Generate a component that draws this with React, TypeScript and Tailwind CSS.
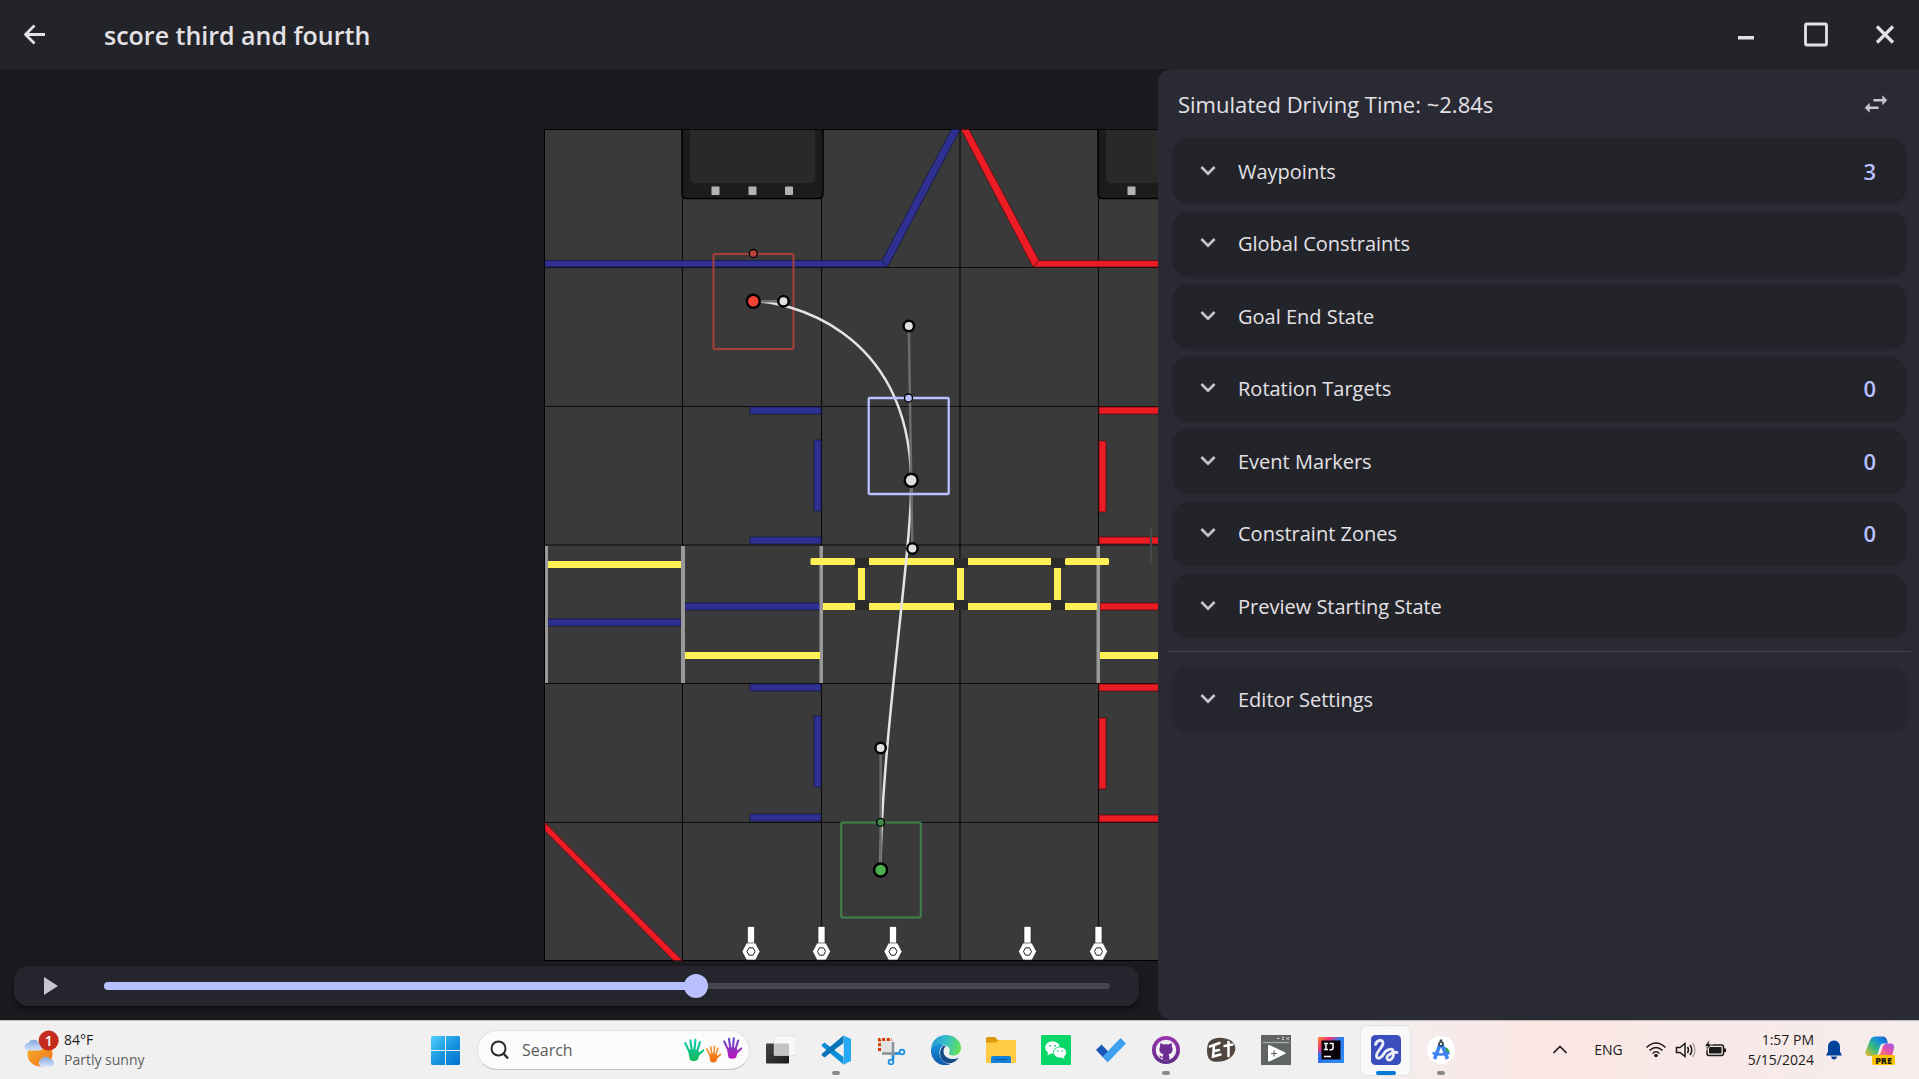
import { useState, type ReactNode } from "react";

const SECTIONS: { label: string; count?: number }[] = [
  { label: "Waypoints", count: 3 },
  { label: "Global Constraints" },
  { label: "Goal End State" },
  { label: "Rotation Targets", count: 0 },
  { label: "Event Markers", count: 0 },
  { label: "Constraint Zones", count: 0 },
  { label: "Preview Starting State" },
];

function MaterialIcon({ d, className }: { d: string; className?: string }) {
  return (
    <svg viewBox="0 0 24 24" className={className ?? "size-[30px]"} fill="currentColor" aria-hidden="true">
      <path d={d} />
    </svg>
  );
}

function TitleBar() {
  return (
    <header className="flex h-[69px] shrink-0 items-center bg-[#232429] text-[#e4e1e6]">
      <button type="button" aria-label="Back" className="ml-5 flex size-[30px] items-center justify-center">
        <svg viewBox="0 0 30 30" className="size-[30px]" fill="none" stroke="currentColor" strokeWidth="2.800" aria-hidden="true">
          <path d="M25 14.500H6.500M14.500 5.500 5.500 14.500l9 9" strokeLinejoin="round" strokeLinecap="butt" />
        </svg>
      </button>
      <h1 className="ml-[54px] text-[25px] leading-8 font-semibold">score third and fourth</h1>
      <div className="ml-auto flex">
        <button type="button" aria-label="Minimize" className="flex h-[69px] w-[70px] items-center justify-center">
          <svg viewBox="0 0 30 30" className="size-[30px]" aria-hidden="true">
            <rect x="7" y="16" width="16" height="3.500" fill="currentColor" />
          </svg>
        </button>
        <button type="button" aria-label="Maximize" className="flex h-[69px] w-[70px] items-center justify-center">
          <svg viewBox="0 0 30 30" className="size-[30px]" aria-hidden="true">
            <rect x="4.500" y="4" width="21" height="21" rx="1.500" fill="none" stroke="currentColor" strokeWidth="2.800" />
          </svg>
        </button>
        <button type="button" aria-label="Close" className="flex h-[69px] w-[68px] items-center justify-center">
          <svg viewBox="0 0 30 30" className="size-[30px]" aria-hidden="true">
            <path d="M7 6.500l16 16M23 6.500L7 22.500" fill="none" stroke="currentColor" strokeWidth="3.200" />
          </svg>
        </button>
      </div>
    </header>
  );
}

type Bar = [x: number, y: number, w: number, h: number];

const BLUE_BARS: Bar[] = [
  [750, 407, 71, 7],
  [814, 440, 7, 71],
  [750, 537, 71, 7],
  [548, 619, 133, 7],
  [685, 603, 135, 7],
  [750, 684, 71, 7],
  [814, 716, 7, 71],
  [750, 814, 71, 7],
];
const RED_BARS: Bar[] = [
  [1099, 407, 72, 7],
  [1099, 441, 7, 71],
  [1099, 537, 72, 7],
  [1100, 603, 72, 7],
  [1099, 684, 72, 7],
  [1099, 718, 7, 71],
  [1099, 815, 72, 7],
];
const YELLOW_BARS: Bar[] = [
  [548, 561, 133, 7],
  [685, 652, 135, 7],
  [1100, 652, 134, 7],
  [869, 558, 85, 7],
  [968, 558, 83, 7],
  [823, 603, 32, 7],
  [869, 603, 85, 7],
  [968, 603, 83, 7],
  [1065, 603, 32, 7],
  [858, 568, 7, 32],
  [957, 568, 7, 32],
  [1054, 568, 7, 32],
];

function Bars({ bars, fill, stroke }: { bars: Bar[]; fill: string; stroke: string }) {
  return (
    <g fill={fill} stroke={stroke} strokeWidth="0.8">
      {bars.map(([x, y, w, h]) => (
        <rect key={`${x}-${y}`} x={x} y={y} width={w} height={h} />
      ))}
    </g>
  );
}

function Backstage({ x }: { x: number }) {
  return (
    <g>
      <path d={`M${x} 129v64.500q0 5 5 5h131q5 0 5 -5v-64.500z`} fill="#1c1c1c" stroke="#000" strokeWidth="1.5" />
      <path d={`M${x + 8} 130v48q0 5 5 5h115q5 0 5 -5v-48z`} fill="#292929" />
      {[29.5, 66.5, 103].map((dx) => (
        <rect key={dx} x={x + dx} y="186.500" width="8" height="8.500" rx="0.800" fill="#b3b3b3" />
      ))}
    </g>
  );
}

function Pin({ x }: { x: number }) {
  return (
    <g transform={`translate(${x} 951.5)`} stroke="#222" strokeWidth="0.6">
      <rect x="-3.500" y="-25" width="7" height="17" fill="#fff" />
      <path d="M-4.500 -8.500h9L9 0l-4.500 8.500h-9L-9 0z" fill="#fff" />
      <path d="M-2 -3.700h4L4 0l-2 3.700h-4L-4 0z" fill="#fff" strokeWidth="1" />
    </g>
  );
}

function Field() {
  return (
    <svg viewBox="544 129 831 832" className="h-[832px] w-[831px] shrink-0" role="img" aria-label="Field map with path">
      <rect x="544.500" y="129.500" width="830" height="831" fill="#3a3a3b" stroke="#000" />
      <g stroke="#0c0c0c" strokeWidth="1.2">
        {[682.5, 821.5, 960, 1098.5, 1237].map((x) => (
          <path key={x} d={`M${x} 129V961`} />
        ))}
        {[267.5, 406.5, 545, 683.5, 822.5].map((y) => (
          <path key={y} d={`M544 ${y}H1375`} />
        ))}
      </g>
      <Backstage x={682} />
      <Backstage x={1098} />
      <path d="M545 260.500H882L951.500 129.500H960L887.500 267H545z" fill="#2e3192" stroke="#15173f" strokeWidth="0.8" />
      <path d="M882 260.500L887.500 267" stroke="#15173f" />
      <path d="M961 129.500H969L1039 260.500H1375V267H1033z" fill="#ec1c24" stroke="#5a0d10" strokeWidth="0.8" />
      <path d="M1039 260.500L1033 267" stroke="#5a0d10" />
      <path d="M545 822.500L682.500 960.500H673.500L545 831z" fill="#ec1c24" stroke="#5a0d10" strokeWidth="0.800" />
      <Bars bars={BLUE_BARS} fill="#2e3192" stroke="#15173f" />
      <Bars bars={RED_BARS} fill="#ec1c24" stroke="#5a0d10" />
      <g fill="#999">
        <rect x="545" y="546" width="3" height="137" />
        <rect x="681" y="546" width="4" height="137" />
        <rect x="819.500" y="546" width="3.500" height="137" />
        <rect x="1096.500" y="546" width="3.500" height="137" />
      </g>
      <g fill="#2b2a29">
        {[855, 954, 1051].map((x) => (
          <g key={x}>
            <rect x={x} y="558" width="14" height="10" />
            <rect x={x} y="600" width="14" height="10" />
          </g>
        ))}
      </g>
      <g fill="#fff056">
        <rect x="810.500" y="558" width="44.500" height="7" rx="1.500" />
        <rect x="1065" y="558" width="44" height="7" rx="1.500" />
      </g>
      <Bars bars={YELLOW_BARS} fill="#fff056" stroke="none" />
      {[751, 821.5, 893, 1027.5, 1098.5].map((x) => (
        <Pin key={x} x={x} />
      ))}

      <g fill="none" strokeWidth="2">
        <rect x="713.500" y="254" width="80" height="95" rx="1" stroke="#a8403a" />
        <rect x="841.200" y="822.500" width="79.500" height="95" rx="1" stroke="#41824a" />
      </g>
      <path
        d="M753.300 301.300C783.500 301.300 908.800 326 911.200 480.300C912.400 548.300 880.600 748 880.600 870"
        fill="none"
        stroke="#e4e4e4"
        strokeWidth="2.500"
      />
      <g stroke="#6c6c6c" strokeWidth="2.500">
        <path d="M753.300 301.300H783.500M908.800 326L911.200 480.300L912.400 548.300M880.600 748V870" />
      </g>
      <rect x="868.700" y="398" width="80" height="96" rx="1" fill="none" stroke="#b8c0ff" strokeWidth="2.300" />
      <g stroke="#000" strokeWidth="2.400">
        <circle cx="783.500" cy="301.300" r="5.200" fill="#e0e0e0" />
        <circle cx="908.800" cy="326" r="5.200" fill="#e0e0e0" />
        <circle cx="912.400" cy="548.500" r="5.200" fill="#e0e0e0" />
        <circle cx="880.600" cy="748" r="5.200" fill="#e0e0e0" />
        <circle cx="753.300" cy="301.300" r="6.500" fill="#f44336" />
        <circle cx="911.200" cy="480.300" r="6.500" fill="#e0e0e0" />
        <circle cx="880.600" cy="870" r="6.500" fill="#4caf50" />
      </g>
      <g stroke="#000" strokeWidth="1.300">
        <circle cx="753.300" cy="253.500" r="4" fill="#b9443b" />
        <circle cx="908.500" cy="398" r="4" fill="#b8c0ff" />
        <circle cx="880.600" cy="822.300" r="4" fill="#3f8746" />
      </g>
    </svg>
  );
}

function Timeline() {
  const max = 284;
  const [time, setTime] = useState(167);
  return (
    <div className="mt-[5px] mr-[780px] ml-3.5 flex h-10 items-center rounded-[14px] bg-[#25252e] pr-[29px] shadow-md shadow-black/40">
      <button type="button" aria-label="Play" className="ml-5 text-[#c7c5d0]">
        <MaterialIcon d="M8 4.800v14.400L19.200 12z" />
      </button>
      <div className="relative ml-10 flex flex-1 items-center">
        <div className="h-1.5 w-full rounded-full bg-[#46464f]" />
        <div
          className="absolute h-2 rounded-full bg-[#b8c0ff]"
          style={{ width: `${(time / max) * 100}%` }}
        />
        <input
          type="range"
          aria-label="Preview time"
          min={0}
          max={max}
          value={time}
          onChange={(e) => setTime(Number(e.target.value))}
          className="absolute -left-3 h-6 w-[calc(100%+24px)] appearance-none bg-transparent [&::-webkit-slider-thumb]:size-6 [&::-webkit-slider-thumb]:appearance-none [&::-webkit-slider-thumb]:rounded-full [&::-webkit-slider-thumb]:bg-[#b8c0ff]"
        />
      </div>
    </div>
  );
}

function SectionCard({ label, count, className }: { label: string; count?: number; className: string }) {
  return (
    <button
      type="button"
      aria-expanded="false"
      className={`flex h-[63px] w-full items-center rounded-2xl pr-[30px] pl-5 text-left shadow-sm shadow-black/20 ${className}`}
    >
      <span className="text-[#c7c5d0]">
        <MaterialIcon d="M16.590 8.090L12 12.670 7.410 8.090 6 9.500l6 6 6-6z" />
      </span>
      <span className="mt-0.5 ml-[15px] flex-1 text-[20px] leading-7">{label}</span>
      {count !== undefined && <span className="text-[22px] leading-7 font-semibold text-[#b8c0ff]">{count}</span>}
    </button>
  );
}

function Sidebar() {
  return (
    <aside className="h-full w-[761px] rounded-l-[14px] bg-[#2a2a34] px-2.5 text-[#e4e1e6]">
      <div className="flex h-[70px] items-center pr-[18px] pl-2.5">
        <h2 className="flex-1 text-[22px] leading-8">Simulated Driving Time: ~2.84s</h2>
        <button type="button" aria-label="Swap sides" className="text-[#c7c5d0]">
          <MaterialIcon d="M6.990 11L3 15l3.990 4v-3H14v-2H6.990v-3zM21 9l-3.990-4v3H10v2h7.010v3L21 9z" />
        </button>
      </div>
      <div className="mr-[3px] ml-[5px] flex h-[498px] flex-col justify-between">
        {SECTIONS.map((s) => (
          <SectionCard key={s.label} label={s.label} count={s.count} className="bg-[#232429]" />
        ))}
      </div>
      <hr className="mt-3.5 mr-[-2px] border-[#46464f]" />
      <div className="mt-[15px] mr-[3px] ml-[5px]">
        <SectionCard label="Editor Settings" className="bg-[#25252e]" />
      </div>
    </aside>
  );
}

function Svg({ children, size = "size-[30px]" }: { children: ReactNode; size?: string }) {
  return (
    <svg viewBox="0 0 30 30" className={size} aria-hidden="true">
      {children}
    </svg>
  );
}

function Hand({ from, to, id, className }: { from: string; to: string; id: string; className: string }) {
  return (
    <svg viewBox="0 0 24 26" className={className} aria-hidden="true">
      <defs>
        <linearGradient id={id} x1="0" y1="0" x2="0" y2="26" gradientUnits="userSpaceOnUse">
          <stop offset="0" stopColor={from} />
          <stop offset="1" stopColor={to} />
        </linearGradient>
      </defs>
      <g stroke={`url(#${id})`} strokeWidth="2.400" strokeLinecap="round" fill="none">
        <path d="M6.500 14L2.500 5.500M9.500 13L8 2.500M12.500 13L13.500 2M15.500 14L18.500 4.500M16 19L22 13.500" />
      </g>
      <path d="M5.500 13.500Q10 11 16.500 13.500L18.500 16.500L16 24Q11 26.500 7.500 24z" fill={`url(#${id})`} />
    </svg>
  );
}

const APPS: { name: string; running?: boolean; active?: boolean; icon: ReactNode }[] = [
  {
    name: "Task View",
    icon: (
      <Svg>
        <defs>
          <linearGradient id="tv" x1="0" y1="0" x2="1" y2="1">
            <stop offset="0" stopColor="#444" />
            <stop offset="1" stopColor="#1b1b1b" />
          </linearGradient>
        </defs>
        <rect x="0" y="8.500" width="23" height="20" rx="1" fill="url(#tv)" />
        <rect x="8" y="1" width="22" height="19.500" rx="1" fill="#f8f8f8" stroke="#d0d0d0" strokeWidth="0.500" />
        <rect x="8" y="8.500" width="15" height="12" fill="#c4c4c4" />
      </Svg>
    ),
  },
  {
    name: "Visual Studio Code",
    running: true,
    icon: (
      <Svg>
        <path d="M1 9.500L3.500 7.500L22.500 22V29.500L1.200 11.500Q.4 10.300 1 9.500z" fill="#0a8fd8" />
        <path d="M1 20.500L3.500 22.500L22.500 8V.5L1.200 18.500Q.4 19.700 1 20.500z" fill="#0873b8" />
        <path d="M21.500 0L30 4V26L21.500 30Q23 29 22.800 27V3Q23 1 21.500 0z" fill="#24a9f2" />
      </Svg>
    ),
  },
  {
    name: "Snipping Tool",
    icon: (
      <Svg>
        <rect x="3" y="4" width="14" height="14" fill="#e3e3e3" />
        <path d="M3.500 16V4.500H16" fill="none" stroke="#d83b01" strokeWidth="3" strokeDasharray="3 1.700" />
        <path d="M17 7V23M6 18.500H23" fill="none" stroke="#8a9199" strokeWidth="2.500" />
        <path d="M17 20V25M19 18.500H24" fill="none" stroke="#1b93e0" strokeWidth="2.500" />
        <circle cx="26" cy="17" r="2.400" fill="none" stroke="#1b93e0" strokeWidth="1.800" />
        <circle cx="15" cy="27" r="2.400" fill="none" stroke="#1b93e0" strokeWidth="1.800" />
      </Svg>
    ),
  },
  {
    name: "Microsoft Edge",
    icon: (
      <Svg>
        <defs>
          <linearGradient id="edgeTop" x1="0" y1="0.300" x2="1" y2="0.500">
            <stop offset="0" stopColor="#2495d8" />
            <stop offset="0.500" stopColor="#35c1c9" />
            <stop offset="1" stopColor="#66e155" />
          </linearGradient>
          <linearGradient id="edgeSide" x1="0" y1="0" x2="0" y2="1">
            <stop offset="0" stopColor="#1a93dc" />
            <stop offset="1" stopColor="#0b58a8" />
          </linearGradient>
        </defs>
        <path d="M0 14C1 5 7 0 15 0C24 0 30 6 30 13C30 18 26 20.500 22 20.500C19 20.500 17.500 19.500 18 18C19.500 16 19 12 15 10.500C9 8 2 9.500 0 14z" fill="url(#edgeTop)" />
        <path d="M0 14C2 9.500 8 7.500 13 10C8 12 7 19 10.500 24C12.500 27.500 16.500 29.500 19.500 29.200C9 33 -1 25 0 14z" fill="url(#edgeSide)" />
        <path d="M13 10.500C8.500 13 8 20 11 24.500C14 29.500 22 30.500 28 22.500C22 26 12.500 23.500 12.500 16.500C12.500 14 13.500 12 15 11z" fill="#124a8a" />
      </Svg>
    ),
  },
  {
    name: "File Explorer",
    icon: (
      <Svg>
        <path d="M0 3.500Q0 2 1.500 2H9L12.500 5.500H28.500Q30 5.500 30 7V12H0z" fill="#dd9a08" />
        <path d="M0 7.500H10L13 5H30V28H0z" fill="#ffcb45" />
        <path d="M5 28V23Q5 21 7 21H23Q25 21 25 23V28z" fill="#1482d4" />
        <path d="M9 24.500H21" stroke="#0b5aa5" strokeWidth="1.200" />
      </Svg>
    ),
  },
  {
    name: "WeChat",
    icon: (
      <Svg>
        <rect width="30" height="30" rx="1.500" fill="#07d768" />
        <ellipse cx="11.500" cy="12.500" rx="7.300" ry="6.300" fill="#fff" />
        <path d="M7 17L6.500 20.500L10.500 18z" fill="#fff" />
        <ellipse cx="19" cy="17.500" rx="6.500" ry="5.600" fill="#fff" stroke="#07d768" strokeWidth="0.900" />
        <path d="M20 22L23.500 24L22.800 20.500z" fill="#fff" />
        <g fill="#07c160">
          <circle cx="9" cy="10.800" r="0.900" />
          <circle cx="14" cy="10.800" r="0.900" />
          <circle cx="17" cy="16" r="0.800" />
          <circle cx="21.200" cy="16" r="0.800" />
        </g>
      </Svg>
    ),
  },
  {
    name: "Microsoft To Do",
    icon: (
      <Svg>
        <path d="M0 15L5.500 9.500L17 21.500L11.500 27z" fill="#1b56b8" />
        <path d="M6.500 21.800L24.500 3L30 8.500L12 27z" fill="#3fa0ee" />
      </Svg>
    ),
  },
  {
    name: "GitHub Desktop",
    running: true,
    icon: (
      <Svg>
        <defs>
          <linearGradient id="gh" x1="0" y1="0" x2="0" y2="1">
            <stop offset="0" stopColor="#9a35ad" />
            <stop offset="1" stopColor="#5e2b86" />
          </linearGradient>
        </defs>
        <circle cx="15" cy="15" r="14" fill="url(#gh)" />
        <circle cx="15" cy="15" r="10.300" fill="#f4f1f5" />
        <path d="M9.500 8L12.500 9.500Q15 9 17.500 9.500L20.500 8Q21.300 10 20.800 11.500Q22 13 21.500 15.500Q21 18.500 17.500 19.300Q18.300 20 18.300 22V25.200H11.700V23Q9 23.500 8 20.500Q9.500 20.500 10.300 21.500Q11.200 22 11.800 21.500Q11.900 20 12.500 19.300Q9 18.500 8.500 15.500Q8 13 9.200 11.500Q8.700 10 9.500 8z" fill="#6d2e93" />
      </Svg>
    ),
  },
  {
    name: "Etcher",
    icon: (
      <Svg>
        <path d="M3 7Q8 2 17 3Q27 4 29 11Q30.500 18 24 23Q16 28 7 26.500Q1 25 1 16Q1 10 3 7z" fill="#51463f" />
        <path d="M13.500 8L4 11.500M8 11L7 21.500L14.500 19.500M8 16L13 15M22.500 7L22.500 21M18.500 11L26.500 9.500" fill="none" stroke="#fff" strokeWidth="2.500" strokeLinecap="round" />
      </Svg>
    ),
  },
  {
    name: "Media Player",
    icon: (
      <Svg>
        <rect width="30" height="30" fill="#606462" />
        <path d="M2 7.500H28" stroke="#a9acab" strokeWidth="1.300" />
        <path d="M16 3.500H18.500M21 2.500H23M21 4.500H23M25.500 2.200L28 4.800M28 2.200L25.500 4.800" stroke="#dcdcdc" strokeWidth="1" />
        <path d="M8 11V25.500L23.500 18.200z" fill="#fff" stroke="#fff" strokeWidth="2" strokeLinejoin="round" />
        <path d="M13 15.500V21.500M10 18.500H16" stroke="#606462" strokeWidth="1.200" />
      </Svg>
    ),
  },
  {
    name: "IntelliJ IDEA",
    icon: (
      <Svg>
        <defs>
          <linearGradient id="ij" x1="0" y1="0" x2="1" y2="1">
            <stop offset="0" stopColor="#ff8a2a" />
            <stop offset="0.250" stopColor="#f0356f" />
            <stop offset="0.450" stopColor="#2f7df0" />
            <stop offset="1" stopColor="#2f8cf5" />
          </linearGradient>
        </defs>
        <rect x="2" y="2" width="26" height="26" fill="url(#ij)" />
        <path d="M2 16L6 22V28H2z" fill="#2f6df0" />
        <rect x="5.500" y="5.500" width="19" height="19" fill="#0a0208" />
        <path d="M8 8.500H12M10 8.500V14.500M8 14.500H12M13.500 8.500H17V13Q17 14.700 15 14.700H13.500M8 21.500H15" fill="none" stroke="#fff" strokeWidth="1.500" />
      </Svg>
    ),
  },
  {
    name: "PathPlanner",
    active: true,
    icon: (
      <Svg>
        <rect width="30" height="30" rx="4.500" fill="#3a4fbd" />
        <path
          d="M4.500 9.500C6 4.500 12.500 4 12 8.500C11.500 12.500 5 17 5.500 21C6 25.500 11 22.500 13 18.500C15 14 23 12.500 22 16.500C21 19.500 15.500 19.500 16 23C17 27.500 22.500 24.500 22.500 18.500Q24 16.500 26 17.500"
          fill="none"
          stroke="#eef0f8"
          strokeWidth="2.800"
          strokeLinecap="round"
        />
      </Svg>
    ),
  },
  {
    name: "Android Studio",
    running: true,
    icon: (
      <Svg>
        <circle cx="15" cy="15" r="14" fill="#fff" />
        <path d="M18 12Q23 12 23.500 18H18z" fill="#34a853" />
        <path d="M15 7L8.500 24M15 7L21.500 24" stroke="#3f82f1" strokeWidth="3.600" />
        <path d="M6.500 18Q15 21 23.500 18" fill="none" stroke="#3f82f1" strokeWidth="2.400" />
        <circle cx="15" cy="9" r="2" fill="#dfe6f0" stroke="#303c42" strokeWidth="1.400" />
        <path d="M15 4.500V6.500" stroke="#303c42" strokeWidth="2.400" />
      </Svg>
    ),
  },
];

function Weather() {
  return (
    <button type="button" className="flex w-[418px] shrink-0 items-center pl-6 text-left">
      <svg viewBox="24 1027 36 40" className="h-10 w-9" aria-hidden="true">
        <defs>
          <linearGradient id="sun" x1="0" y1="0" x2="1" y2="1">
            <stop offset="0" stopColor="#f7b52c" />
            <stop offset="1" stopColor="#f2711c" />
          </linearGradient>
          <linearGradient id="cloud" x1="0" y1="0" x2="0" y2="1">
            <stop offset="0" stopColor="#86a6df" />
            <stop offset="1" stopColor="#d3e2fa" />
          </linearGradient>
        </defs>
        <circle cx="40" cy="1051" r="12.500" fill="url(#sun)" />
        <path d="M28.500 1047.500a3.800 3.800 0 0 1 0-7.600a6 6 0 0 1 10.500 0a4 4 0 0 1 1.500 7.600z" fill="url(#cloud)" />
        <path d="M41 1063.500a3.800 3.800 0 0 1 0-7a5.500 5.500 0 0 1 9.500 0a3.600 3.600 0 0 1 1 7z" fill="url(#cloud)" />
        <circle cx="48.700" cy="1037.500" r="10" fill="#c42b1c" />
        <text x="48.700" y="1043" textAnchor="middle" fontSize="14" fontWeight="600" fill="#fff">
          1
        </text>
      </svg>
      <span className="ml-1 flex flex-col text-[14px] leading-5">
        <span className="text-[#1b1b1b]">84°F</span>
        <span className="text-[#5f5f5f]">Partly sunny</span>
      </span>
    </button>
  );
}

function Tray() {
  return (
    <div className="ml-auto flex items-center pr-6 text-[14px] leading-5 text-[#1b1b1b]">
      <button type="button" aria-label="Show hidden icons" className="mr-[26px]">
        <svg viewBox="0 0 16 16" className="size-4" fill="none" stroke="#1b1b1b" strokeWidth="1.700" aria-hidden="true">
          <path d="M1.500 11L8 4.500L14.500 11" />
        </svg>
      </button>
      <span>ENG</span>
      <svg viewBox="0 0 82 24" className="ml-[22px] h-6 w-[82px]" fill="none" stroke="#1b1b1b" strokeWidth="1.500" aria-hidden="true">
        <path d="M1.500 9.500Q11 .5 20.500 9.500M4.500 12.500Q11 6.500 17.500 12.500M7.500 15.500Q11 12 14.500 15.500" />
        <circle cx="11" cy="17.500" r="1.800" fill="#1b1b1b" stroke="none" />
        <path d="M31.500 9.500H35L40 5.500V18.500L35 14.500H31.500zM42.500 9Q44.500 12 42.500 15M45 7Q48.500 12 45 17" />
        <path d="M47.500 5Q52.500 12 47.500 19" stroke="#b5a8a8" />
        <rect x="62" y="7" width="16.500" height="10.500" rx="2" />
        <rect x="64" y="9" width="12.500" height="6.500" fill="#1b1b1b" stroke="none" />
        <path d="M80 10.500V14" strokeWidth="2.200" />
        <path d="M64.500 1L59.500 8.500H62.500L60.500 13L67.500 6H64z" fill="#1b1b1b" stroke="#f9e6e4" strokeWidth="0.800" />
      </svg>
      <time className="ml-[21px] flex flex-col text-right">
        <span>1:57 PM</span>
        <span>5/15/2024</span>
      </time>
      <svg viewBox="0 0 16 20" className="ml-3 h-5 w-4" fill="#00429a" aria-hidden="true">
        <path d="M8 .5Q14 1 14 7V11.500L16 15.500H0L2 11.500V7Q2 1 8 .5zM5 16.500H11Q10.500 19.500 8 19.500T5 16.500z" />
      </svg>
      <button type="button" aria-label="Copilot" className="ml-[23px]">
        <Svg>
          <defs>
            <linearGradient id="cpA" x1="0" y1="1" x2="1" y2="0">
              <stop offset="0" stopColor="#f3c12c" />
              <stop offset="0.400" stopColor="#36b87c" />
              <stop offset="0.700" stopColor="#1a8fe0" />
              <stop offset="1" stopColor="#1553c9" />
            </linearGradient>
            <linearGradient id="cpB" x1="0" y1="1" x2="1" y2="0">
              <stop offset="0" stopColor="#ff8a56" />
              <stop offset="0.500" stopColor="#e352a8" />
              <stop offset="1" stopColor="#9a5cf0" />
            </linearGradient>
          </defs>
          <path d="M5.500 4Q7 1.500 10 1.500H18Q21 1.500 22 5L23 8.500H18.500Q16 8.500 15 11.500L12.500 19Q11.500 21 8.500 21H3.500Q-.5 20.500 .8 16z" fill="url(#cpA)" />
          <path d="M22 8.500H26Q30 9 29 13.500L27 20.500H12Q15 20 16 17L18 11Q19 8.500 22 8.500z" fill="url(#cpB)" />
          <rect x="7" y="20" width="23" height="10" rx="2" fill="#fcc400" />
          <text x="18.500" y="28.500" textAnchor="middle" fontSize="9" fontWeight="800" fill="#1b1b1b">
            PRE
          </text>
        </Svg>
      </button>
    </div>
  );
}

function Taskbar() {
  return (
    <footer className="flex h-[59px] shrink-0 items-stretch border-t border-[#bdbdbd] bg-linear-to-r from-[#f0f0f0] from-70% via-[#fbe6e4] via-80% to-[#f5edec]">
      <Weather />
      <div className="flex items-center">
        <button type="button" aria-label="Start" className="flex w-[55px] justify-center">
          <svg viewBox="0 0 29 29" className="size-[29px]" aria-hidden="true">
            <defs>
              <linearGradient id="win" x1="0" y1="0" x2="29" y2="29" gradientUnits="userSpaceOnUse">
                <stop offset="0" stopColor="#4fd3fc" />
                <stop offset="0.500" stopColor="#1a96e2" />
                <stop offset="1" stopColor="#0470d0" />
              </linearGradient>
            </defs>
            <path d="M1 0H14V14H0V1zM15 0H28L29 1V14H15zM0 15H14V29H1L0 28zM15 15H29V28L28 29H15z" fill="url(#win)" />
          </svg>
        </button>
        <label className="ml-1 flex h-10 w-[273px] items-center rounded-full border border-b-[#c4c4c4] border-[#e0e0e0] bg-[#fbfbfb] pr-1.5 pl-3">
          <svg viewBox="0 0 20 20" className="size-5" fill="none" stroke="#2b2b2b" strokeWidth="2" aria-hidden="true">
            <circle cx="8.500" cy="8.500" r="7" />
            <path d="M13.500 13.500L18 18.500" strokeWidth="2.500" />
          </svg>
          <input
            type="text"
            aria-label="Search"
            placeholder="Search"
            className="ml-3 w-0 flex-1 bg-transparent text-[16px] leading-6 placeholder:text-[#5c5c5c]"
          />
          <Hand id="handGreen" from="#0fd0b8" to="#12b857" className="h-6 w-[22px]" />
          <Hand id="handOrange" from="#f9a03c" to="#f26a0a" className="mt-2 h-[18px] w-[17px]" />
          <Hand id="handPurple" from="#5f50c8" to="#c015b8" className="mb-1 h-6 w-[21px]" />
        </label>
        <nav aria-label="Apps" className="ml-[3px] flex">
          {APPS.map((app) => (
            <button key={app.name} type="button" aria-label={app.name} className="flex w-[55px] justify-center">
              <span
                className={`relative flex size-[49px] items-center justify-center rounded-md ${
                  app.active ? "bg-[#f9f9f9] ring-1 ring-[#e4e4e4]" : ""
                }`}
              >
                {app.icon}
                {app.running && <span className="absolute bottom-0 h-1 w-2 rounded-full bg-[#8a8a8a]" />}
                {app.active && <span className="absolute bottom-0 h-1 w-5 rounded-full bg-[#0078d4]" />}
              </span>
            </button>
          ))}
        </nav>
      </div>
      <Tray />
    </footer>
  );
}

export default function App() {
  return (
    <div className="flex min-h-screen flex-col bg-[#1b1b1f] font-['Open_Sans','Noto_Sans',sans-serif]">
      <TitleBar />
      <main className="grid flex-1 grid-cols-1 overflow-hidden">
        <section className="col-start-1 row-start-1 flex flex-col pt-[60px]">
          <div className="flex justify-center">
            <Field />
          </div>
          <Timeline />
        </section>
        <div className="z-10 col-start-1 row-start-1 flex items-center justify-self-end">
          <div className="mr-1.5 h-[34px] w-0.5 bg-[#46464f]" />
          <Sidebar />
        </div>
      </main>
      <Taskbar />
    </div>
  );
}
